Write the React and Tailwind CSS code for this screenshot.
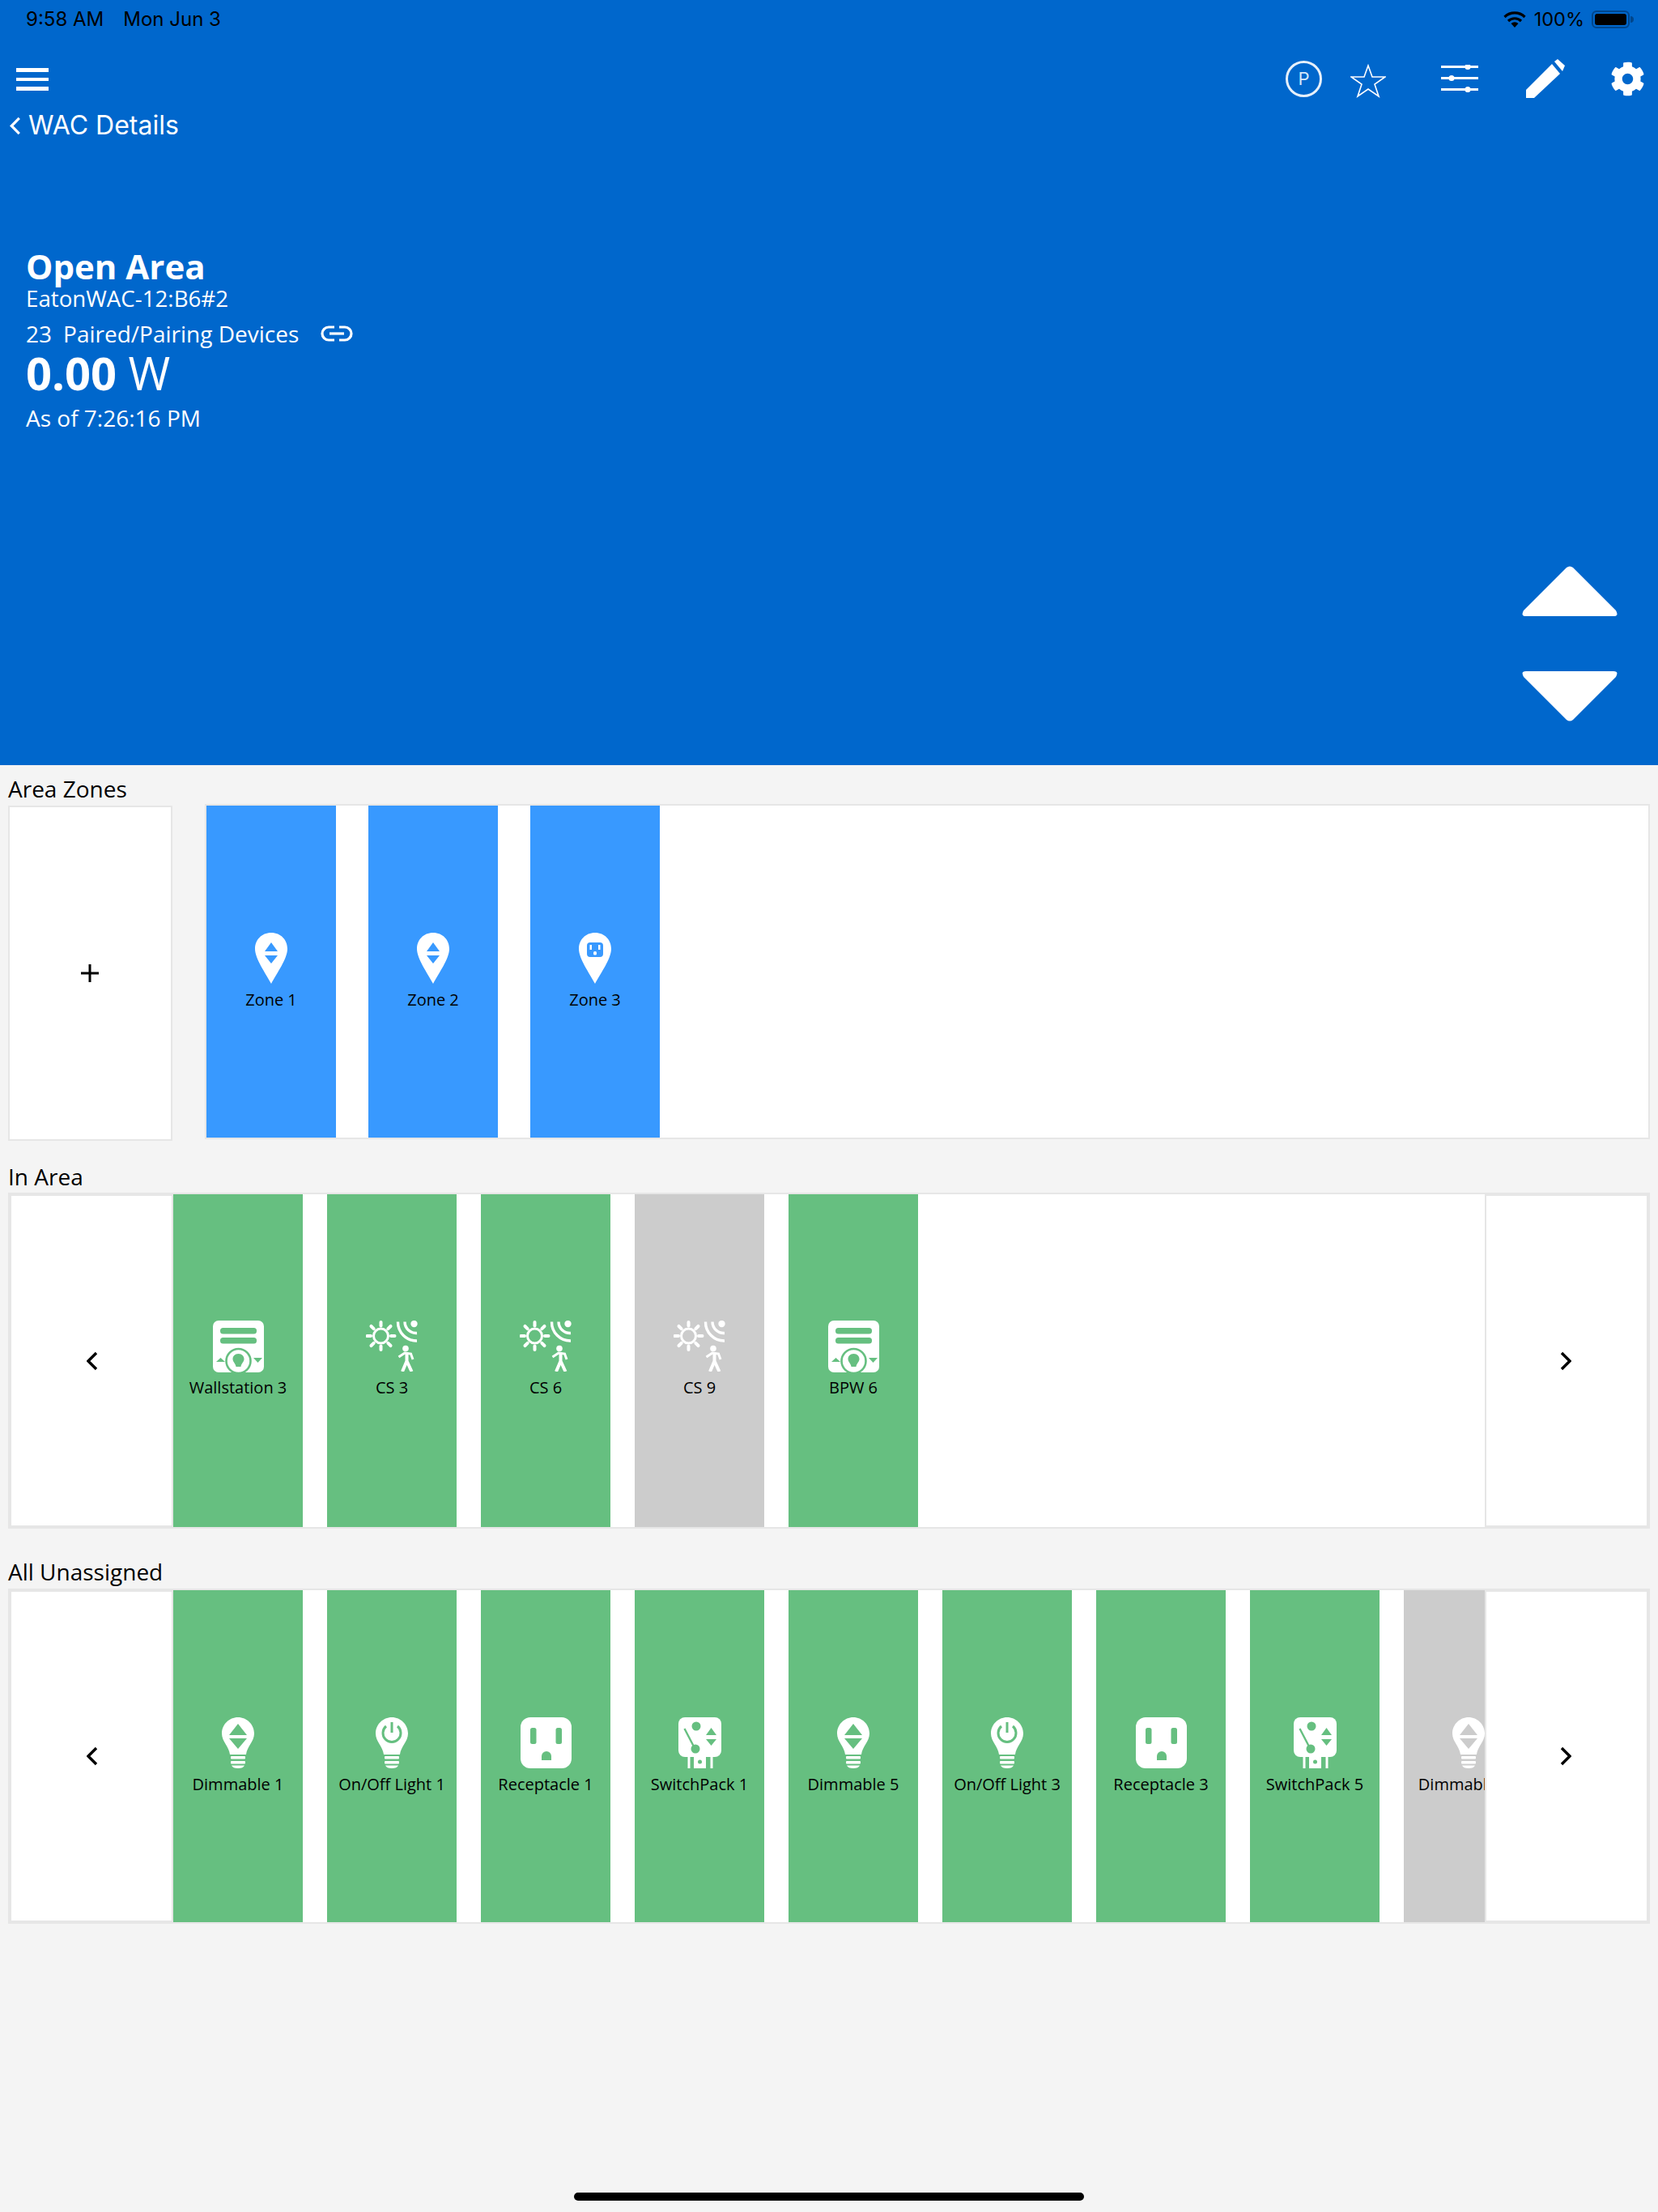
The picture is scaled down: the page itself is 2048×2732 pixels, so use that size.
import React from 'react';
import { FaCog } from 'react-icons/fa';

const WHITE = '#ffffff';

function Chevron({ dir = 'left', className = '' }) {
  const points = dir === 'left' ? '12,2 2,12 12,22' : '2,2 12,12 2,22';
  return (
    <svg viewBox="0 0 14 24" className={className} fill="none" stroke="currentColor" strokeWidth="3.4">
      <polyline points={points} />
    </svg>
  );
}

function Triangle({ down }) {
  return (
    <svg viewBox="0 0 118 62" className={`w-[118px] h-[62px] ${down ? 'rotate-180' : ''}`}>
      <path
        d="M55 2 Q59 -1 63 2 L116 55 Q120 62 113 62 L5 62 Q-2 62 2 55 Z"
        fill={WHITE}
      />
    </svg>
  );
}

function PinIcon({ cut, outlet }) {
  return (
    <svg viewBox="0 0 40 63" className="w-10 h-[63px]">
      <path d="M20 0 C32 0 40 9 40 20 C40 32 27 50 20 63 C13 50 0 32 0 20 C0 9 8 0 20 0 Z" fill={WHITE} />
      {outlet ? (
        <g>
          <rect x="10" y="12" width="20" height="18" rx="4" fill={cut} />
          <rect x="13.5" y="15" width="2.5" height="6" fill={WHITE} />
          <rect x="24" y="15" width="2.5" height="6" fill={WHITE} />
          <rect x="18" y="23" width="4" height="4.5" rx="1.5" fill={WHITE} />
        </g>
      ) : (
        <g fill={cut}>
          <polygon points="12,23 28,23 20,12" />
          <polygon points="12,28 28,28 20,38" />
        </g>
      )}
    </svg>
  );
}

function BulbBody() {
  return (
    <g fill={WHITE}>
      <path d="M20 0 C31 0 40 9 40 20 C40 30 31 36 30 46 L10 46 C9 36 0 30 0 20 C0 9 9 0 20 0 Z" />
      <rect x="11" y="48" width="18" height="3.5" rx="1" />
      <rect x="11" y="54" width="18" height="3.5" rx="1" />
      <path d="M12 59.5 H28 C27 62 24 63 20 63 C16 63 13 62 12 59.5 Z" />
    </g>
  );
}

function DimmerIcon({ cut }) {
  return (
    <svg viewBox="0 0 40 63" className="w-10 h-[63px]">
      <BulbBody />
      <polygon points="9,22 31,22 20,8" fill={cut} />
      <polygon points="9,26 31,26 20,39" fill={cut} />
    </svg>
  );
}

function OnOffIcon({ cut }) {
  return (
    <svg viewBox="0 0 40 63" className="w-10 h-[63px]">
      <BulbBody />
      <path d="M13 11 A11 11 0 1 0 27 11" fill="none" stroke={cut} strokeWidth="3" />
      <line x1="20" y1="6" x2="20" y2="19" stroke={cut} strokeWidth="3" />
    </svg>
  );
}

function ReceptacleIcon({ cut }) {
  return (
    <svg viewBox="0 0 63 63" className="w-[63px] h-[63px]">
      <rect width="63" height="63" rx="12" fill={WHITE} />
      <rect x="12" y="13" width="7.5" height="20" rx="2.5" fill={cut} />
      <rect x="43.5" y="13" width="7.5" height="20" rx="2.5" fill={cut} />
      <path d="M26 53 V48 A6 6 0 0 1 38 48 V53 Z" fill={cut} />
    </svg>
  );
}

function SwitchPackIcon({ cut }) {
  return (
    <svg viewBox="0 0 53 63" className="w-[53px] h-[63px]">
      <rect width="53" height="49" rx="8" fill={WHITE} />
      <rect x="11.5" y="46" width="3" height="17" fill={WHITE} />
      <rect x="39.5" y="46" width="3" height="17" fill={WHITE} />
      <rect x="19" y="46" width="15" height="17" fill={WHITE} />
      <circle cx="26.5" cy="55" r="2.5" fill={cut} />
      <circle cx="22" cy="11" r="5.5" fill={cut} />
      <circle cx="21" cy="39" r="5.5" fill={cut} />
      <line x1="7.5" y1="14" x2="20" y2="38" stroke={cut} strokeWidth="2.4" />
      <polygon points="34,22 47,22 40.5,13" fill={cut} />
      <polygon points="34,27 47,27 40.5,35" fill={cut} />
    </svg>
  );
}

function WallstationIcon({ cut }) {
  return (
    <svg viewBox="0 0 63 64" className="w-[63px] h-16">
      <rect width="63" height="64" rx="7" fill={WHITE} />
      <rect x="9" y="9" width="45" height="7.5" rx="3.5" fill={cut} />
      <rect x="9" y="21" width="45" height="7.5" rx="3.5" fill={cut} />
      <circle cx="31.5" cy="50" r="15" fill={WHITE} stroke={cut} strokeWidth="2.6" />
      <path d="M31.5 41 C36 41 38.5 44 38.5 47.5 C38.5 51 35 53 34.5 57 L28.5 57 C28 53 24.5 51 24.5 47.5 C24.5 44 27 41 31.5 41 Z" fill={cut} />
      <polygon points="4,51 15,51 9.5,46" fill={cut} />
      <polygon points="50,46 61,46 55.5,52" fill={cut} />
    </svg>
  );
}

function SensorIcon() {
  const rays = [0, 45, 90, 135, 180, 225, 270, 315];
  return (
    <svg viewBox="0 0 64 63" className="w-16 h-[63px]" fill="none" stroke={WHITE}>
      <circle cx="18.5" cy="19" r="9" strokeWidth="3" />
      {rays.map((deg) => (
        <line
          key={deg}
          x1="18.5"
          y1="6.5"
          x2="18.5"
          y2="2"
          strokeWidth="4"
          strokeLinecap="round"
          transform={`rotate(${deg} 18.5 19)`}
        />
      ))}
      <circle cx="59.5" cy="4" r="4.2" fill={WHITE} stroke="none" />
      <path d="M48 1.5 A14 14 0 0 0 63 15.5" strokeWidth="3.4" />
      <path d="M39.5 1.5 A23 23 0 0 0 63 25" strokeWidth="3.4" />
      <circle cx="49" cy="34.5" r="3.8" fill={WHITE} stroke="none" />
      <path d="M40.5 45 L48 40 L55.5 41 L58 48" strokeWidth="3" />
      <path d="M50.5 40 L50.5 50 L45 63 M50.5 50 L56.5 63" strokeWidth="4" />
    </svg>
  );
}

const ICONS = {
  dimmer: DimmerIcon,
  onoff: OnOffIcon,
  receptacle: ReceptacleIcon,
  switchpack: SwitchPackIcon,
  wallstation: WallstationIcon,
  sensor: SensorIcon,
};

const GREEN = '#66bf80';
const GRAY = '#cccccc';
const ZONE_BLUE = '#3899ff';

const inArea = [
  { label: 'Wallstation 3', icon: 'wallstation' },
  { label: 'CS 3', icon: 'sensor' },
  { label: 'CS 6', icon: 'sensor' },
  { label: 'CS 9', icon: 'sensor', off: true },
  { label: 'BPW 6', icon: 'wallstation' },
];

const unassigned = [
  { label: 'Dimmable 1', icon: 'dimmer' },
  { label: 'On/Off Light 1', icon: 'onoff' },
  { label: 'Receptacle 1', icon: 'receptacle' },
  { label: 'SwitchPack 1', icon: 'switchpack' },
  { label: 'Dimmable 5', icon: 'dimmer' },
  { label: 'On/Off Light 3', icon: 'onoff' },
  { label: 'Receptacle 3', icon: 'receptacle' },
  { label: 'SwitchPack 5', icon: 'switchpack' },
  { label: 'Dimmable 10', icon: 'dimmer', off: true },
];

function TileBody({ icon, label, className = '' }) {
  return (
    <div className={`h-full flex flex-col items-center justify-center ${className}`}>
      <div className="h-16 flex items-start justify-center">{icon}</div>
      <span className="mt-[5px] text-[20px] leading-[27px] text-black whitespace-nowrap">{label}</span>
    </div>
  );
}

function DeviceTile({ device, bodyClass }) {
  const Icon = ICONS[device.icon];
  const color = device.off ? GRAY : GREEN;
  return (
    <div className={`w-40 shrink-0 ${device.off ? 'bg-[#cccccc]' : 'bg-[#66bf80]'}`}>
      <TileBody icon={<Icon cut={color} />} label={device.label} className={bodyClass} />
    </div>
  );
}

function NavButton({ dir }) {
  return (
    <div className="w-[202px] shrink-0 h-full border-2 border-[#e6e6e6] bg-white flex items-center justify-center">
      <Chevron dir={dir} className={`w-[14px] h-6 text-black ${dir === 'left' ? 'ml-[2px]' : 'mr-[3px]'}`} />
    </div>
  );
}

function DeviceRow({ devices, height, bodyClass }) {
  return (
    <div className={`flex w-[2028px] border-2 border-[#e6e6e6] bg-white ${height}`}>
      <NavButton dir="left" />
      <div className="flex-1 min-w-0 flex gap-[30px] overflow-hidden">
        {devices.map((d) => (
          <DeviceTile key={d.label} device={d} bodyClass={bodyClass} />
        ))}
      </div>
      <NavButton dir="right" />
    </div>
  );
}

function StatusBar() {
  return (
    <div className="h-[47px] flex items-center justify-between pl-[32px] pr-[30px] font-['Inter'] text-black">
      <div className="flex gap-[24px] text-[24px]">
        <span>9:58 AM</span>
        <span>Mon Jun 3</span>
      </div>
      <div className="flex items-center text-[23.5px]">
        <svg viewBox="0 0 28 20" className="w-7 h-5" fill="none" stroke="#000000" strokeWidth="3.2">
          <path d="M1.5 7 A18 18 0 0 1 26.5 7" />
          <path d="M6 12 A11.5 11.5 0 0 1 22 12" />
          <path d="M14 20 L9.5 15 A6.5 6.5 0 0 1 18.5 15 Z" fill="#000000" stroke="none" />
        </svg>
        <span className="ml-[10px]">100%</span>
        <div className="ml-[9px] w-[47px] h-[22px] rounded-[6px] border-2 border-[#00468c] p-[2px]">
          <div className="w-full h-full rounded-[3px] bg-black" />
        </div>
        <div className="w-[4px] h-[8px] ml-[1px] rounded-r-sm bg-[#00468c]" />
      </div>
    </div>
  );
}

function Toolbar() {
  return (
    <div className="mt-[25px] h-[50px] flex items-center pl-5 pr-4 text-white">
      <div className="mt-[2px] w-10 flex flex-col gap-[7px]">
        <div className="h-[4.5px] bg-white" />
        <div className="h-[4.5px] bg-white" />
        <div className="h-[4.5px] bg-white" />
      </div>
      <div className="ml-auto flex items-center">
        <div className="w-[45px] h-[45px] rounded-full border-[3.5px] border-white/90 flex items-center justify-center font-['Inter'] text-[22px] text-[#d5e7fa]">
          P
        </div>
        <svg viewBox="0 0 44 42" className="ml-[35px] mt-[6px] w-11 h-[42px]" fill="none" stroke={WHITE} strokeWidth="1.6">
          <polygon points="22,2 27,16 43,16 30,25 35,40 22,31 9,40 14,25 1,16 17,16" />
        </svg>
        <svg viewBox="0 0 46 34" className="ml-[68px] w-[46px] h-[34px]" fill={WHITE}>
          <rect y="1" width="46" height="3" />
          <rect y="15" width="46" height="3" />
          <rect y="29" width="46" height="3" />
          <circle cx="33" cy="2.5" r="3.6" />
          <circle cx="13" cy="16.5" r="3.6" />
          <circle cx="33" cy="30.5" r="3.6" />
        </svg>
        <svg viewBox="0 0 48 48" className="ml-[59px] w-12 h-12" fill={WHITE}>
          <polygon points="0,38 32,6 42,18 10,48 0,48" />
          <polygon points="35,3 39,0 48,8 45,15" />
        </svg>
        <FaCog className="ml-[56px] w-[43px] h-[43px] text-white" />
      </div>
    </div>
  );
}

function AreaInfo() {
  return (
    <div className="mt-[134px] pl-[32px] flex flex-col text-white">
      <div className="h-11 text-[42px] leading-[44px] font-bold">Open Area</div>
      <div className="mt-[1px] h-8 text-[27.7px] leading-8">EatonWAC-12:B6#2</div>
      <div className="mt-3 h-8 flex items-center text-[28px] leading-8">
        <span>23</span>
        <span className="ml-[14px]">Paired/Pairing Devices</span>
        <svg viewBox="0 0 40 20" className="ml-[27px] w-10 h-5" fill="none" stroke={WHITE} strokeWidth="3.2">
          <path d="M17 2 H10 A8 8 0 0 0 10 18 H17" />
          <path d="M23 2 H30 A8 8 0 0 1 30 18 H23" />
          <line x1="11" y1="10" x2="29" y2="10" />
        </svg>
      </div>
      <div className="mt-[2px] h-[60px] text-[56px] leading-[60px]">
        <span className="font-bold">0.00</span>
        <span> W</span>
      </div>
      <div className="mt-[10px] h-8 text-[28px] leading-8">As of 7:26:16 PM</div>
    </div>
  );
}

function Header() {
  return (
    <div className="h-[945px] flex flex-col bg-[#0067cc]">
      <StatusBar />
      <Toolbar />
      <div className="mt-[15px] h-9 flex items-center pl-3 text-white">
        <Chevron dir="left" className="w-[14px] h-[23px]" />
        <span className="ml-[9px] font-['Inter'] text-[32px] leading-9">WAC Details</span>
      </div>
      <AreaInfo />
      <div className="mt-auto pb-[54px] pr-[50px] self-end flex flex-col gap-[68px]">
        <Triangle />
        <Triangle down />
      </div>
    </div>
  );
}

export default function App() {
  const zones = [
    { label: 'Zone 1' },
    { label: 'Zone 2' },
    { label: 'Zone 3', outlet: true },
  ];

  return (
    <div className="h-[2732px] flex flex-col bg-[#f4f4f4] font-['Open_Sans',sans-serif] overflow-hidden">
      <Header />

      <div className="px-[10px] flex flex-col text-black">
        <div className="mt-[11px] mb-[1px] h-9 text-[28px] leading-9">Area Zones</div>
        <div className="flex items-start">
          <div className="mt-[2px] w-[203px] h-[414px] border-2 border-[#e6e6e6] bg-white flex items-center justify-center">
            <svg viewBox="0 0 22 22" className="mr-[2px] w-[22px] h-[22px]" fill="#000000">
              <rect x="9.5" width="3" height="22" />
              <rect y="9.5" width="22" height="3" />
            </svg>
          </div>
          <div className="ml-[40px] flex-1 h-[414px] border-2 border-[#e6e6e6] bg-white flex gap-10">
            {zones.map((z) => (
              <div key={z.label} className="w-40 bg-[#3899ff]">
                <TileBody icon={<PinIcon cut={ZONE_BLUE} outlet={z.outlet} />} label={z.label} />
              </div>
            ))}
          </div>
        </div>

        <div className="mt-[26px] mb-[2px] h-9 text-[28px] leading-9">In Area</div>
        <DeviceRow devices={inArea} height="h-[415px]" bodyClass="pb-[3px]" />

        <div className="mt-[35px] mb-[3px] h-9 text-[28px] leading-9">All Unassigned</div>
        <DeviceRow devices={unassigned} height="h-[414px]" />
      </div>

      <div className="mt-auto mb-[14px] self-center w-[630px] h-[10px] rounded-full bg-black" />
    </div>
  );
}
